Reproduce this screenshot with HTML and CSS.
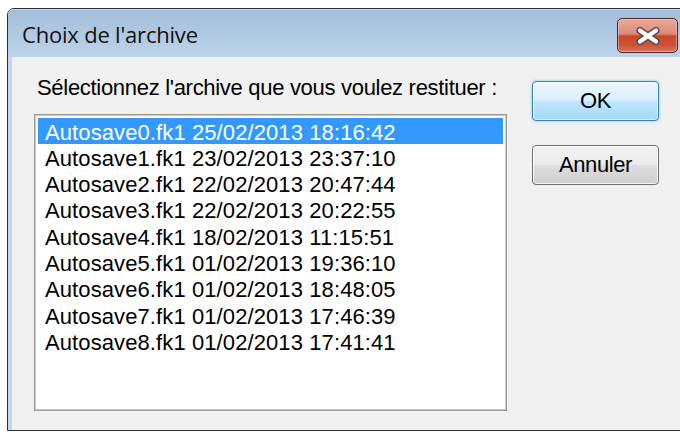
FILE: index.html
```html
<!DOCTYPE html>
<html lang="fr">
<head>
<meta charset="utf-8">
<title>Choix de l'archive</title>
<link rel="stylesheet" href="styles.css">
</head>
<body>
<div class="window">
  <div class="titlebar">
    <span class="title">Choix de l'archive</span>
    <button class="close" aria-label="Fermer">
      <svg width="26" height="18" viewBox="0 0 26 18">
        <path d="M5 3.5 L21 14.5 M21 3.5 L5 14.5" stroke="#5a4a4e" stroke-width="7" stroke-linecap="round" fill="none"/>
        <path d="M5 3.5 L21 14.5 M21 3.5 L5 14.5" stroke="#ffffff" stroke-width="4.2" stroke-linecap="round" fill="none"/>
      </svg>
    </button>
  </div>
  <div class="client">
    <div class="main">
      <div class="prompt">Sélectionnez l'archive que vous voulez restituer :</div>
      <ul class="listbox">
        <li class="selected">Autosave0.fk1 25/02/2013 18:16:42</li>
        <li>Autosave1.fk1 23/02/2013 23:37:10</li>
        <li>Autosave2.fk1 22/02/2013 20:47:44</li>
        <li>Autosave3.fk1 22/02/2013 20:22:55</li>
        <li>Autosave4.fk1 18/02/2013 11:15:51</li>
        <li>Autosave5.fk1 01/02/2013 19:36:10</li>
        <li>Autosave6.fk1 01/02/2013 18:48:05</li>
        <li>Autosave7.fk1 01/02/2013 17:46:39</li>
        <li>Autosave8.fk1 01/02/2013 17:41:41</li>
      </ul>
    </div>
    <div class="actions">
      <button class="btn btn-default">OK</button>
      <button class="btn">Annuler</button>
    </div>
  </div>
</div>
</body>
</html>
```
FILE: styles.css
```css
html, body {
  margin: 0;
  height: 435px;
  overflow: hidden;
  background: #ffffff;
}

/* dialog frame */
.window {
  margin: 8px 0 0 7px;
  width: 690px;
  box-sizing: border-box;
  border: 1px solid #2e2e2e;
  border-radius: 7px 7px 0 0;
  background: #c3d7ec;
  display: flex;
  flex-direction: column;
}

.titlebar {
  height: 48px;
  display: flex;
  align-items: flex-start;
  padding: 0 18px 0 14px;
  border-radius: 6px 6px 0 0;
  background: linear-gradient(#a2bdd9, #b2cbe4 60%, #bcd3ea);
  box-shadow: inset 0 1px 0 rgba(255, 255, 255, 0.35);
}

.title {
  margin-top: 12px;
  font: 22px/26px "Open Sans", "Liberation Sans", sans-serif;
  color: #111;
  letter-spacing: -0.2px;
}

.close {
  margin: 9px 0 0 auto;
  width: 61px;
  height: 35px;
  padding: 0;
  display: flex;
  align-items: center;
  justify-content: center;
  border: 1px solid #4a2626;
  border-radius: 5px;
  background: linear-gradient(#eaa99b 0%, #de8a77 45%, #c9472d 52%, #cc5236 78%, #d8765b 100%);
  box-shadow: inset 0 0 0 1px rgba(255, 220, 210, 0.45);
}

/* client area */
.client {
  margin: 0 4px;
  height: 373px;
  box-sizing: border-box;
  padding: 18px 0 0 22px;
  display: flex;
  background: #f0f0f0;
  font-family: "Liberation Sans", Arial, sans-serif;
  color: #000;
}

.main {
  width: 473px;
  display: flex;
  flex-direction: column;
}

.prompt {
  padding-left: 3px;
  margin-bottom: 13px;
  font-size: 22px;
  line-height: 26px;
  letter-spacing: -0.3px;
  white-space: nowrap;
}

.listbox {
  margin: 0;
  padding: 3px;
  list-style: none;
  height: 297px;
  box-sizing: border-box;
  background: #ffffff;
  border: 1px solid #9a9a9a;
  box-shadow: inset 1px 1px 0 #c8c8c8, inset -1px -1px 0 #c8c8c8;
}

.listbox li {
  height: 26.3px;
  box-sizing: border-box;
  padding: 1.5px 0 0 7px;
  font-size: 22px;
  line-height: 25px;
  letter-spacing: 0.1px;
  white-space: nowrap;
}

.listbox li.selected {
  background: #3399ff;
  color: #ffffff;
}

/* push buttons */
.actions {
  margin: 6px 0 0 25px;
  display: flex;
  flex-direction: column;
  gap: 24px;
}

.btn {
  width: 127px;
  height: 40px;
  padding: 0;
  border: 1px solid #707070;
  border-radius: 4px;
  font: 22px/1 "Liberation Sans", Arial, sans-serif;
  letter-spacing: -0.4px;
  color: #000;
  background: linear-gradient(#f2f2f2 0%, #ebebeb 48%, #dddddd 52%, #cfcfcf 100%);
  box-shadow: inset 0 0 0 1px rgba(255, 255, 255, 0.75);
}

.btn-default {
  border-color: #3c7fb1;
  background: linear-gradient(#eaf6fd 0%, #d9f0fc 48%, #bee6fd 52%, #a7d9f5 100%);
  box-shadow: inset 0 0 0 1px rgba(255, 255, 255, 0.6), 0 0 2px 1px rgba(120, 200, 240, 0.5);
}
```
